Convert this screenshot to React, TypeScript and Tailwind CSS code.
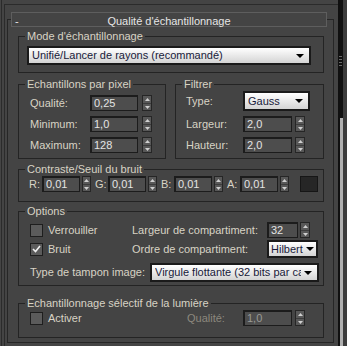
import { clsx } from "clsx";
import { twMerge } from "tailwind-merge";
import type { ReactNode } from "react";

function Spinner({ className }: { className?: string }) {
  return (
    <div
      className={twMerge(
        "flex h-[16px] w-[10px] shrink-0 flex-col items-center justify-center border border-[#262626] bg-[#585858]",
        className
      )}
    >
      <svg width="5" height="3" viewBox="0 0 5 3">
        <path d="M2.5 0L5 3H0z" fill="#d0d0d0" />
      </svg>
      <div className="my-[2px] h-px w-full bg-[#3c3c3c]" />
      <svg width="5" height="3" viewBox="0 0 5 3">
        <path d="M0 0h5L2.5 3z" fill="#d0d0d0" />
      </svg>
    </div>
  );
}

function Field({ value, className, dim }: { value: string; className?: string; dim?: boolean }) {
  return (
    <div
      className={clsx(
        "flex h-[16px] shrink-0 items-center border border-t-2 border-l-2 border-[#1c1c1c] bg-[#4d4d4d] pl-[2px]",
        dim ? "text-[#9a9a96]" : "text-[#e4e4e4]",
        className
      )}
    >
      {value}
    </div>
  );
}

function Select({ value, className, arrowClass }: { value: string; className?: string; arrowClass?: string }) {
  return (
    <div
      className={twMerge(
        "flex shrink-0 items-center border-2 border-[#1a1a1a] bg-linear-to-b from-white to-[#d4d4d4] pl-[3px] pr-[5px] text-[#181a3a]",
        className
      )}
    >
      <span className="min-w-0 flex-1 overflow-hidden whitespace-nowrap">{value}</span>
      <svg className={twMerge("ml-[3px] shrink-0", arrowClass)} width="8" height="4" viewBox="0 0 8 4">
        <path d="M0 0h8L4 4z" fill="#000" />
      </svg>
    </div>
  );
}

function Check({ checked }: { checked?: boolean }) {
  return (
    <div className="flex h-[13px] w-[13px] shrink-0 items-center justify-center border border-[#1e1e1e] bg-[#5b5b5b]">
      {checked && (
        <svg width="9" height="8" viewBox="0 0 9 8">
          <path d="M1 4l2.5 2.5L8 1" stroke="#f0f0f0" strokeWidth="1.6" fill="none" />
        </svg>
      )}
    </div>
  );
}

function Group({ title, className, children }: { title: string; className?: string; children: ReactNode }) {
  return (
    <fieldset className={clsx("border border-[#242424]", className)}>
      <legend className="ml-[6px] px-[2px] leading-[14px]">{title}</legend>
      {children}
    </fieldset>
  );
}

const samples = [
  { label: "Qualité:", value: "0,25" },
  { label: "Minimum:", value: "1,0" },
  { label: "Maximum:", value: "128" },
];

const seuils = ["R:", "G:", "B:", "A:"];

export default function App() {
  return (
    <div className="flex h-[346px] w-[347px] overflow-hidden bg-[#444444] font-['Liberation_Sans',Arial,sans-serif] text-[11px] text-[#d8d3c5]">
      <div className="ml-[1px] flex w-[337px] border-l border-[#2b2b2b] pl-[2px] pt-[4px]">
        <div className="flex-1 border-l border-t border-[#2b2b2b]">
          <div className="ml-[2px] mt-[14px] w-[327px] border border-[#262626] pb-[4px]">
            <div className="-mt-[8px] ml-[3px] grid h-[15px] w-[316px] grid-cols-[20px_1fr_20px] items-center border border-[#5e5e5e] bg-[#444444] text-[#e6e6e6]">
              <span className="pl-[3px]">-</span>
              <span className="text-center">Qualité d'échantillonnage</span>
              <span />
            </div>

            <div className="flex flex-col pl-[10px] pr-[9px]">
              <Group title="Mode d'échantillonnage" className="mt-[2px]">
                <div className="pb-[7px] pl-[8px] pt-[3px]">
                  <Select value="Unifié/Lancer de rayons (recommandé)" className="h-[19px] w-[284px]" />
                </div>
              </Group>

              <div className="mt-[4px] flex gap-[9px]">
                <Group title="Echantillons par pixel" className="w-[148px]">
                  <div className="flex flex-col gap-[5px] pb-[5px] pl-[11px] pt-[4px]">
                    {samples.map((s) => (
                      <div key={s.label} className="flex h-[16px] items-center">
                        <span className="w-[60px]">{s.label}</span>
                        <Field value={s.value} className="w-[48px]" />
                        <Spinner className="ml-[4px]" />
                      </div>
                    ))}
                  </div>
                </Group>
                <Group title="Filtrer" className="flex-1">
                  <div className="flex flex-col gap-[5px] pb-[5px] pl-[10px]">
                    <div className="flex h-[20px] items-center">
                      <span className="w-[57px]">Type:</span>
                      <Select value="Gauss" className="h-[20px] w-[67px]" />
                    </div>
                    {["Largeur:", "Hauteur:"].map((l) => (
                      <div key={l} className="flex h-[16px] items-center">
                        <span className="w-[57px]">{l}</span>
                        <Field value="2,0" className="w-[49px]" />
                        <Spinner className="ml-[3px]" />
                      </div>
                    ))}
                  </div>
                </Group>
              </div>

              <Group title="Contraste/Seuil du bruit" className="mt-[3px]">
                <div className="flex h-[16px] items-center pl-[10px]">
                  {seuils.map((s, i) => (
                    <div key={s} className={clsx("flex items-center", i > 0 && "ml-[4px]")}>
                      <span className="w-[13px]">{s}</span>
                      <Field value="0,01" className="w-[38px]" />
                      <Spinner className="ml-[2px] w-[9px]" />
                    </div>
                  ))}
                  <div className="ml-[11px] h-[16px] w-[18px] border border-[#161616] bg-[#262626]" />
                </div>
                <div className="h-[9px]" />
              </Group>

              <Group title="Options" className="mt-[2px]">
                <div className="flex flex-col pb-[3px] pl-[11px] pt-[4px]">
                  <div className="flex h-[16px] items-center">
                    <div className="flex w-[102px] items-center">
                      <Check />
                      <span className="ml-[5px]">Verrouiller</span>
                    </div>
                    <span className="w-[135px]">Largeur de compartiment:</span>
                    <Field value="32" className="w-[31px]" />
                    <Spinner className="ml-[2px]" />
                  </div>
                  <div className="mt-[2px] flex h-[18px] items-center">
                    <div className="flex w-[102px] items-center">
                      <Check checked />
                      <span className="ml-[5px]">Bruit</span>
                    </div>
                    <span className="w-[135px]">Ordre de compartiment:</span>
                    <Select
                      value="Hilbert"
                      className="h-[18px] w-[51px] pl-[2px] pr-[2px]"
                      arrowClass="ml-[1px]"
                    />
                  </div>
                  <div className="mt-[5px] flex h-[19px] items-center">
                    <span className="w-[120px]">Type de tampon image:</span>
                    <Select value="Virgule flottante (32 bits par canal)" className="h-[19px] w-[169px]" />
                  </div>
                </div>
              </Group>

              <Group title="Echantillonnage sélectif de la lumière" className="mt-[10px]">
                <div className="flex h-[16px] items-center pl-[11px]">
                  <div className="flex w-[157px] items-center">
                    <Check />
                    <span className="ml-[5px]">Activer</span>
                  </div>
                  <span className="w-[56px] text-[#8c887e]">Qualité:</span>
                  <Field value="1,0" dim className="w-[49px]" />
                  <Spinner className="ml-[3px]" />
                </div>
                <div className="h-[11px]" />
              </Group>
            </div>
          </div>
        </div>
      </div>

      <div className="flex w-[5px] flex-col bg-[#101010]">
        <div className="ml-[1px] mt-[56px] flex flex-col gap-[2px]">
          {[0, 1, 2, 3].map((i) => (
            <div key={i} className="h-px w-[3px] bg-[#6a6a6a]" />
          ))}
        </div>
        <div className="ml-[2px] mt-[52px] w-[3px] flex-1 bg-[#b0b0b0]" />
      </div>
      <div className="w-[4px] bg-[#3c3c3c]" />
    </div>
  );
}
